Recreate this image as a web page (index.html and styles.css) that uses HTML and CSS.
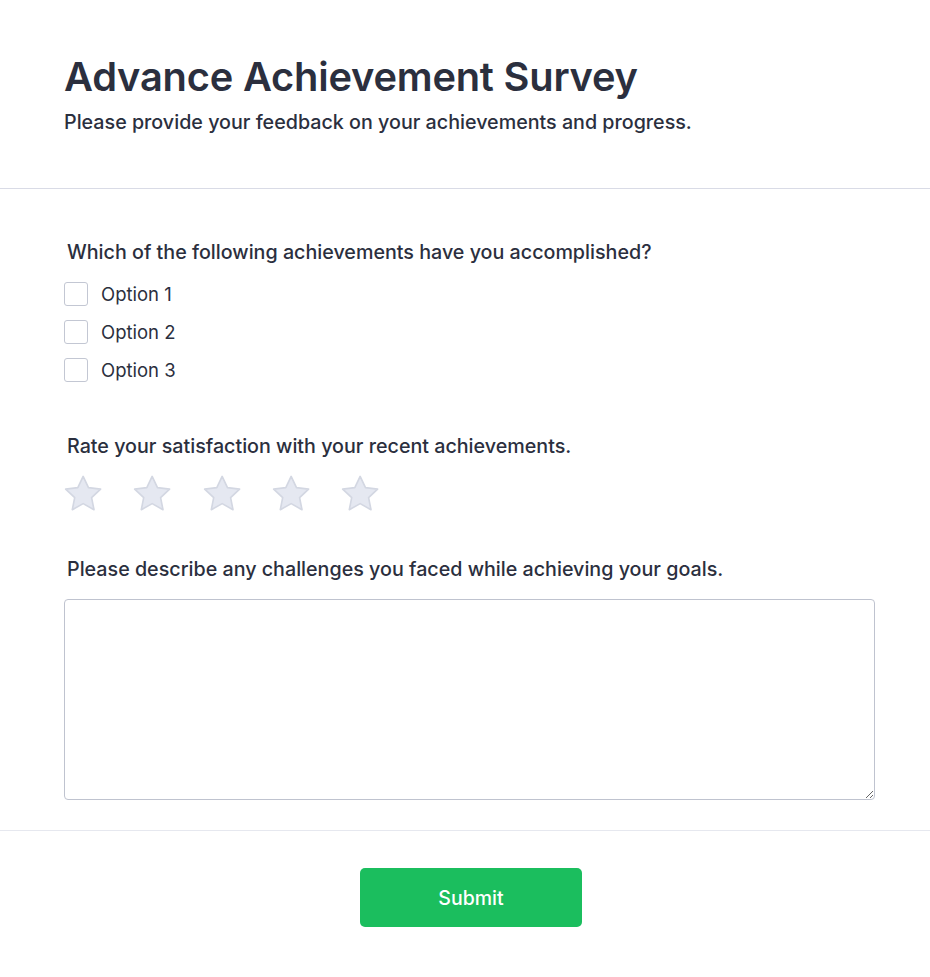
FILE: index.html
```html
<!DOCTYPE html>
<html lang="en">
<head>
<meta charset="utf-8">
<title>Advance Achievement Survey</title>
<link rel="stylesheet" href="styles.css">
</head>
<body>
<div class="survey">
  <header class="header">
    <h1 class="title">Advance Achievement Survey</h1>
    <p class="subtitle">Please provide your feedback on your achievements and progress.</p>
  </header>
  <main class="body">
    <section class="question q-check">
      <h2 class="label">Which of the following achievements have you accomplished?</h2>
      <div class="options">
        <label class="option"><span class="box"></span><span>Option 1</span></label>
        <label class="option"><span class="box"></span><span>Option 2</span></label>
        <label class="option"><span class="box"></span><span>Option 3</span></label>
      </div>
    </section>
    <section class="question q-rate">
      <h2 class="label">Rate your satisfaction with your recent achievements.</h2>
      <div class="stars">
        <svg class="star" viewBox="1.6 1.8 20.8 19.6"><path d="M12 2.6l2.9 6.1 6.6.8-4.9 4.6 1.3 6.6L12 17.4l-5.9 3.3 1.3-6.6-4.9-4.6 6.6-.8z"/></svg>
        <svg class="star" viewBox="1.6 1.8 20.8 19.6"><path d="M12 2.6l2.9 6.1 6.6.8-4.9 4.6 1.3 6.6L12 17.4l-5.9 3.3 1.3-6.6-4.9-4.6 6.6-.8z"/></svg>
        <svg class="star" viewBox="1.6 1.8 20.8 19.6"><path d="M12 2.6l2.9 6.1 6.6.8-4.9 4.6 1.3 6.6L12 17.4l-5.9 3.3 1.3-6.6-4.9-4.6 6.6-.8z"/></svg>
        <svg class="star" viewBox="1.6 1.8 20.8 19.6"><path d="M12 2.6l2.9 6.1 6.6.8-4.9 4.6 1.3 6.6L12 17.4l-5.9 3.3 1.3-6.6-4.9-4.6 6.6-.8z"/></svg>
        <svg class="star" viewBox="1.6 1.8 20.8 19.6"><path d="M12 2.6l2.9 6.1 6.6.8-4.9 4.6 1.3 6.6L12 17.4l-5.9 3.3 1.3-6.6-4.9-4.6 6.6-.8z"/></svg>
      </div>
    </section>
    <section class="question q-text">
      <h2 class="label">Please describe any challenges you faced while achieving your goals.</h2>
      <textarea class="textarea"></textarea>
    </section>
  </main>
  <footer class="footer">
    <button class="submit" type="button">Submit</button>
  </footer>
</div>
</body>
</html>
```
FILE: styles.css
```css
* { box-sizing: border-box; }
html, body { margin: 0; padding: 0; background: #fff; }
body {
  font-family: Inter, "Noto Sans", sans-serif;
  color: #2b2f3e;
}
.header {
  padding: 53px 64px 52px;
  border-bottom: 1px solid #d9dbe6;
}
.title {
  margin: 0;
  font-size: 39.8px;
  line-height: 48px;
  font-weight: 600;
  color: #2b2f3e;
  letter-spacing: -0.2px;
}
.subtitle {
  margin: 7px 0 0;
  font-size: 19.7px;
  line-height: 28px;
  font-weight: 500;
  color: #2b2f3e;
}
.body {
  padding: 49px 55px 30px 64px;
  border-bottom: 1px solid #e6e8ef;
}
.q-check { margin-bottom: 50px; }
.q-rate { margin-bottom: 44px; }
.label {
  margin: 0 0 16px 3px;
  font-size: 19.7px;
  line-height: 28px;
  font-weight: 500;
  color: #2b2f3e;
}
.q-check .label { margin-bottom: 16px; }
.q-rate .label { margin-bottom: 15px; }
.options { display: flex; flex-direction: column; gap: 14px; }
.option {
  display: flex;
  align-items: center;
  gap: 13px;
  font-size: 18.5px;
  line-height: 24px;
  color: #2b2f3e;
}
.box {
  width: 24px;
  height: 24px;
  border: 1px solid #c3c7d3;
  border-radius: 3px;
  background: #fff;
}
.stars { display: flex; gap: 31px; }
.star {
  width: 38.3px;
  height: 36px;
  fill: #e5e8f1;
  stroke: #d3d7e2;
  stroke-width: 0.9;
  stroke-linejoin: round;
}
.textarea {
  display: block;
  width: 811px;
  height: 201px;
  border: 1px solid #bfc3cf;
  border-radius: 4px;
  resize: vertical;
  font-family: inherit;
  font-size: 16px;
}
.footer {
  padding: 37px 0 50px;
  display: flex;
  justify-content: center;
}
.submit {
  width: 222px;
  height: 59px;
  margin-left: 12px;
  border: none;
  border-radius: 5px;
  background: #1bbe5e;
  color: #fff;
  font-family: inherit;
  font-size: 19.5px;
  font-weight: 500;
}
```
